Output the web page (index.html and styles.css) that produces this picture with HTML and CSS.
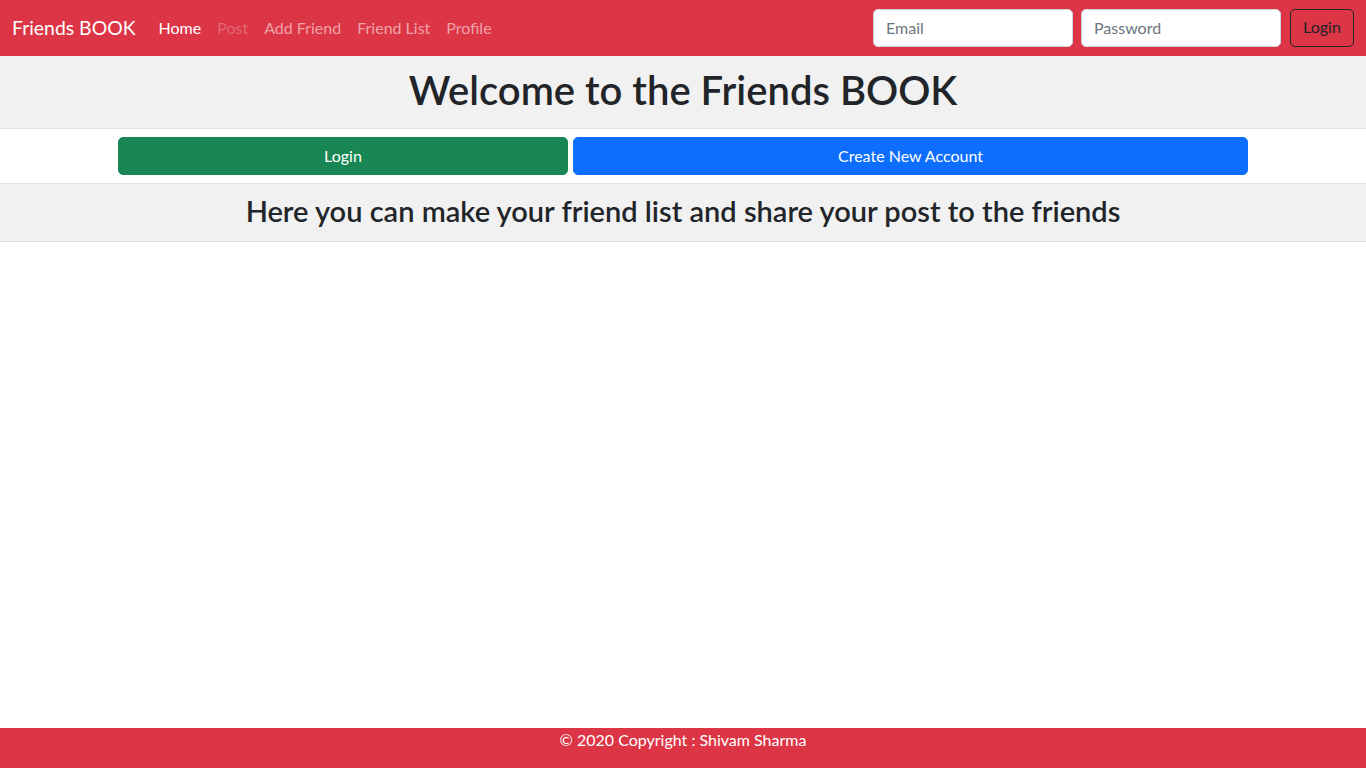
FILE: index.html
```html
<!DOCTYPE html>
<html lang="en">
<head>
<meta charset="utf-8">
<title>Friends BOOK</title>
<link rel="stylesheet" href="styles.css">
</head>
<body>
<nav class="navbar">
  <a class="brand" href="#">Friends BOOK</a>
  <ul class="nav-links">
    <li><a class="nav-link active" href="#">Home</a></li>
    <li><a class="nav-link disabled" href="#">Post</a></li>
    <li><a class="nav-link" href="#">Add Friend</a></li>
    <li><a class="nav-link" href="#">Friend List</a></li>
    <li><a class="nav-link" href="#">Profile</a></li>
  </ul>
  <form class="login-form">
    <input class="form-control" type="email" placeholder="Email">
    <input class="form-control" type="password" placeholder="Password">
    <button class="btn-outline" type="button">Login</button>
  </form>
</nav>
<section class="band band-title">
  <h1 class="title">Welcome to the Friends BOOK</h1>
</section>
<section class="band band-actions">
  <div class="actions">
    <button class="btn btn-success" type="button">Login</button>
    <button class="btn btn-primary" type="button">Create New Account</button>
  </div>
</section>
<section class="band band-sub">
  <h3 class="subtitle">Here you can make your friend list and share your post to the friends</h3>
</section>
<main class="content"></main>
<footer class="footer">© 2020 Copyright : Shivam Sharma</footer>
</body>
</html>
```

FILE: styles.css
```css
* { box-sizing: border-box; }
html, body { height: 100%; }
body {
  margin: 0;
  font-family: Lato, "Noto Sans", sans-serif;
  font-size: 16px;
  line-height: 1.5;
  color: #212529;
  background: #fff;
  display: flex;
  flex-direction: column;
  min-height: 100vh;
}
.navbar {
  height: 56px;
  background: #dc3545;
  display: flex;
  align-items: center;
  padding: 0 12px;
}
.brand {
  color: #fff;
  font-size: 19.4px;
  text-decoration: none;
  margin-right: 15px;
  line-height: 30px;
}
.nav-links {
  list-style: none;
  margin: 0;
  padding: 0;
  display: flex;
}
.nav-link {
  display: block;
  padding: 8px;
  color: rgba(255,255,255,.55);
  text-decoration: none;
}
.nav-link.active { color: #fff; }
.nav-link.disabled { color: rgba(255,255,255,.25); }
.login-form {
  margin-left: auto;
  display: flex;
  gap: 8px;
}
.form-control {
  width: 200px;
  height: 38px;
  padding: 5px 12px 7px;
  font: inherit;
  color: #212529;
  background: #fff;
  border: 1px solid #ced4da;
  border-radius: 5px;
}
.form-control::placeholder { color: #6c757d; }
.btn-outline {
  height: 38px;
  width: 64px;
  margin-left: 1px;
  font: inherit;
  color: #212529;
  background: transparent;
  border: 1px solid #212529;
  border-radius: 5px;
  padding: 5px 12px 7px;
}
.band {
  border-bottom: 1px solid #dee2e6;
}
.band-title {
  background: #f1f1f1;
  padding: 10px 0 14px;
  text-align: center;
}
.title {
  margin: 0;
  font-size: 40px;
  font-weight: 600;
  line-height: 48px;
}
.band-actions {
  padding: 8px 0;
}
.actions {
  width: 1130px;
  margin: 0 auto;
  display: grid;
  grid-template-columns: 450px 675px;
  gap: 5px;
}
.btn {
  height: 38px;
  font: inherit;
  color: #fff;
  border: 1px solid transparent;
  border-radius: 5px;
}
.btn-success { background: #198754; border-color: #198754; }
.btn-primary { background: #0d6efd; border-color: #0d6efd; }
.band-sub {
  background: #f1f1f1;
  padding: 10px 0 14px;
  text-align: center;
}
.subtitle {
  margin: 0;
  font-size: 29px;
  font-weight: 600;
  line-height: 33px;
}
.content { flex: 1; }
.footer {
  height: 40px;
  background: #dc3545;
  color: #fff;
  text-align: center;
  line-height: 24px;
  padding-top: 0;
}
```
